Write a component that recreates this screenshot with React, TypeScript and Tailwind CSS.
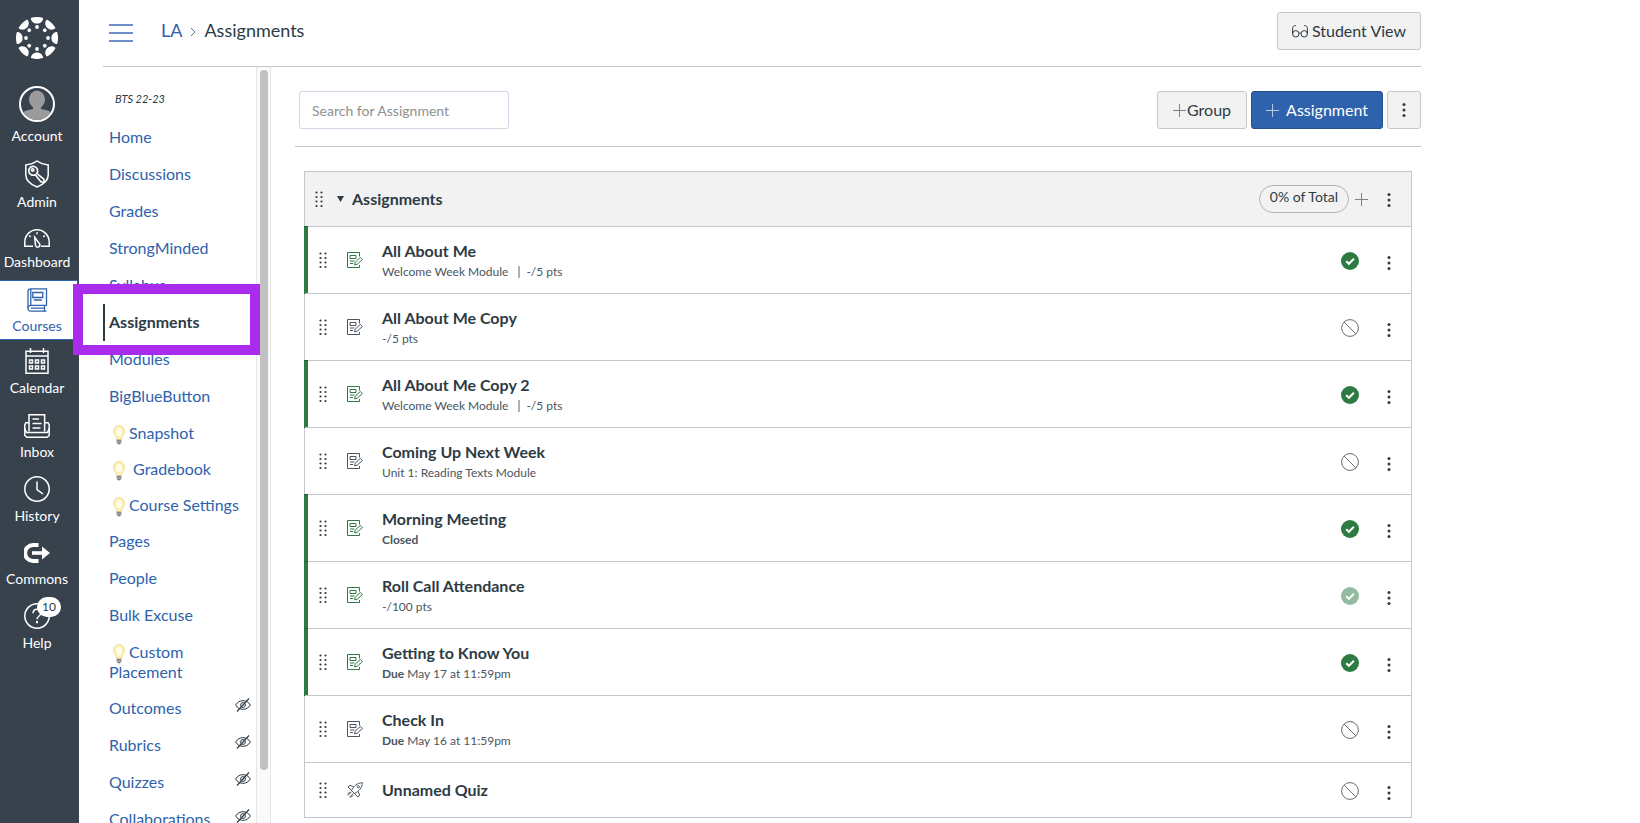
import type { ReactNode } from 'react';
import clsx from 'clsx';

type Status = 'published' | 'locked' | 'unpublished';

interface GlobalLink {
  label: string;
  icon: ReactNode;
  spacing: string;
  active?: boolean;
  badge?: number;
}

interface CourseLink {
  label: string;
  tool?: boolean;
  indent?: boolean;
  hidden?: boolean;
  active?: boolean;
}

interface Assignment {
  title: string;
  module?: string;
  points?: string;
  due?: string;
  closed?: boolean;
  quiz?: boolean;
  status: Status;
}

const LOGO_ANGLES = [0, 45, 90, 135, 180, 225, 270, 315];

function CanvasLogo() {
  return (
    <svg viewBox="0 0 42 42" className="h-[42px] w-[42px]" fill="#fff" aria-hidden="true">
      {LOGO_ANGLES.map((a) => (
        <g key={a} transform={`rotate(${a} 21 21)`}>
          <path d="M14.9 .9A21 21 0 0 1 27.1 .9C27.1 4.300 24.400 6.600 21 6.600S14.900 4.300 14.900 .9Z" />
          <circle cx="21" cy="10" r="1.900" />
        </g>
      ))}
    </svg>
  );
}

function AccountIcon() {
  return (
    <span className="block h-9 w-9 overflow-hidden rounded-full border-2 border-white bg-[#37424d]">
      <svg viewBox="0 0 32 32" className="h-8 w-8" fill="#9b9b9b" aria-hidden="true">
        <ellipse cx="16" cy="11.500" rx="8" ry="9" />
        <path d="M12 17h8v4c5 .8 9 2 11 4.500V32H1v-6.500C3 23 7 21.800 12 21Z" />
      </svg>
    </span>
  );
}

function AdminIcon() {
  return (
    <svg viewBox="0 0 26 28" className="h-7 w-[26px]" fill="none" stroke="currentColor" strokeWidth="1.500" aria-hidden="true">
      <path d="M13 1C10 3.200 6 4.600 1.800 4.900V15c0 5.500 5 9.500 11.200 12 6.200-2.500 11.200-6.500 11.200-12V4.900C20 4.600 16 3.200 13 1Z" />
      <path d="M12.700 13.100l6.400 5.200.2 2.500-2.700.1-5.300-6.600a4 4 0 1 1 1.400-1.200Z" transform="translate(-1.200 -1) scale(1.100)" />
      <circle cx="8.700" cy="10" r="1.200" />
    </svg>
  );
}

function DashboardIcon() {
  return (
    <svg viewBox="0 0 26 19" className="h-[19px] w-[26px]" fill="none" stroke="currentColor" strokeWidth="1.500" aria-hidden="true">
      <path d="M9 17.300H.8V13a12.200 12.200 0 0 1 24.400 0v4.300h-8.200" />
      <path d="M10.700 8.300l4.700 6.300a2.200 2.200 0 1 1-3.900 1.800Z" />
      <path d="M13 3.200v2M5.200 6.600l1.500 1.300M20.800 6.600l-1.500 1.300" />
    </svg>
  );
}

function CoursesIcon() {
  return (
    <svg viewBox="0 0 21 24" className="h-6 w-[21px]" fill="none" stroke="currentColor" strokeWidth="1.300" aria-hidden="true">
      <path d="M19.500 17.300V.8H3.500A2.500 2.500 0 0 0 1 3.300v17a2.600 2.600 0 0 0 2.600 2.900h15.900" />
      <path d="M19.800 17.300H3.600C2 17.300 1 18.500 1 20M17.500 17.300v6M4 20.200h13.500M3.800 1v16M5.800 4.500h10v5h-10ZM6.800 12h8" />
    </svg>
  );
}

function CalendarIcon() {
  return (
    <svg viewBox="0 0 24 26" className="h-[26px] w-6" fill="none" stroke="currentColor" strokeWidth="1.500" aria-hidden="true">
      <path d="M1 3.300h22v21.900H1ZM1 8h22M5.500 0v5M18.500 0v5" />
      <path d="M4.500 12h3v3h-3ZM10.500 12h3v3h-3ZM16.500 12h3v3h-3ZM4.500 18h3v3h-3ZM10.500 18h3v3h-3ZM16.500 18h3v3h-3Z" />
    </svg>
  );
}

function InboxIcon() {
  return (
    <svg viewBox="0 0 26 24" className="h-6 w-[26px]" fill="none" stroke="currentColor" strokeWidth="1.500" aria-hidden="true">
      <path d="M5 17.500V.8h15.600v16.700M5 8.800H1.800L.8 11v10.500L2.800 23.200h20.400l2-1.700V11l-1-2.200h-3.600" />
      <path d="M.8 14.500l1.700 4h21l1.700-4M8.500 5h6.500M8.500 9.500h9M8.500 14h8" />
    </svg>
  );
}

function HistoryIcon() {
  return (
    <svg viewBox="0 0 26 26" className="h-[26px] w-[26px]" fill="none" stroke="currentColor" strokeWidth="1.500" aria-hidden="true">
      <circle cx="13" cy="13" r="12.200" />
      <path d="M13 5.500V13.500l6 4.500" />
    </svg>
  );
}

function CommonsIcon() {
  return (
    <svg viewBox="0 0 26 20" className="mb-0.5 h-5 w-[26px]" fill="none" stroke="currentColor" aria-hidden="true">
      <path d="M14.500 2.100H9a7.900 7.900 0 0 0 0 15.800h5.500" strokeWidth="4" />
      <path d="M8 10h12" strokeWidth="3.600" />
      <path d="M18 3.500L26 10l-8 6.500Z" fill="currentColor" stroke="none" />
    </svg>
  );
}

function HelpIcon() {
  return (
    <svg viewBox="0 0 26 26" className="h-[26px] w-[26px]" fill="none" stroke="currentColor" strokeWidth="1.500" aria-hidden="true">
      <circle cx="13" cy="13" r="12.200" />
      <path d="M9 10.200c0-2.400 1.600-3.900 4-3.900s4 1.500 4 3.600c0 3-4 3.200-4 6.400" />
      <path d="M13 18v2.200" strokeWidth="2" />
    </svg>
  );
}

function BulbIcon() {
  return (
    <svg viewBox="0 0 12 20" className="-my-1 mr-1 ml-1 inline-block h-5 w-3 align-middle" aria-hidden="true">
      <path d="M6 .5a5.500 5.500 0 0 0-5.500 5.800C.5 9.500 3.500 11 3.600 14.500h4.800C8.500 11 11.500 9.500 11.500 6.300A5.500 5.500 0 0 0 6 .5Z" fill="#fdf0b4" stroke="#f0d88c" strokeWidth=".8" />
      <ellipse cx="6" cy="7" rx="2.800" ry="4" fill="#fffdf0" />
      <path d="M3.600 14.500h4.800v3L7 19.600H5l-1.400-2Z" fill="#a9a9a9" />
      <path d="M3.600 16h4.800M4.500 18.500h3" stroke="#666" strokeWidth=".7" />
    </svg>
  );
}

function HiddenIcon() {
  return (
    <svg viewBox="0 0 16 14" className="h-3.5 w-4 shrink-0 text-[#2d3b45]" fill="none" stroke="currentColor" role="img" aria-label="Disabled">
      <path d="M.6 7C2.500 4 5 2.700 8 2.700S13.500 4 15.400 7C13.500 10 11 11.300 8 11.300S2.500 10 .6 7Z" />
      <circle cx="8" cy="7" r="2.400" />
      <path d="M14 .5L2 13.500" strokeWidth="1.200" />
    </svg>
  );
}

function GlassesIcon() {
  return (
    <svg viewBox="0 0 16 13" className="h-[13px] w-4" fill="none" stroke="currentColor" aria-hidden="true">
      <circle cx="3.800" cy="8.800" r="3.200" />
      <circle cx="12.200" cy="8.800" r="3.200" />
      <path d="M.6 9V3.500C.6 1.700 1.600.6 3.800.6M15.400 9V3.500c0-1.800-1-2.900-3.200-2.900M7 8.500c.6-.6 1.400-.6 2 0" />
    </svg>
  );
}

function PlusIcon() {
  return (
    <svg viewBox="0 0 13 13" className="h-[13px] w-[13px]" stroke="currentColor" aria-hidden="true">
      <path d="M6.500 0v13M0 6.500h13" />
    </svg>
  );
}

function KebabIcon() {
  return (
    <svg viewBox="0 0 4 16" className="h-4 w-1" fill="currentColor" aria-hidden="true">
      <circle cx="2" cy="2.400" r="1.500" />
      <circle cx="2" cy="8" r="1.500" />
      <circle cx="2" cy="13.600" r="1.500" />
    </svg>
  );
}

function DragHandle() {
  return (
    <svg viewBox="0 0 8 17" className="h-[17px] w-2 shrink-0" fill="#2d3b45" aria-hidden="true">
      {[1.5, 6, 10.500, 15].map((y) => (
        <g key={y}>
          <circle cx="1.500" cy={y} r="1.100" />
          <circle cx="6.500" cy={y} r="1.100" />
        </g>
      ))}
    </svg>
  );
}

function AssignmentIcon() {
  return (
    <svg viewBox="0 0 16 16" className="h-4 w-4" fill="none" stroke="currentColor" aria-hidden="true">
      <path d="M12.500 4.500V.5H.5v15h12v-2.500" />
      <path d="M3 3.500h6v3H3ZM3 9h4.500M3 11.500h3" />
      <path d="M7.500 12.800l.6-2.500 5.300-4.900 2 2.100-5.300 4.800Z" />
    </svg>
  );
}

function QuizIcon() {
  return (
    <svg viewBox="0 0 16 16" className="h-4 w-4" fill="none" stroke="currentColor" aria-hidden="true">
      <path d="M4.500 8.500C6.500 4.500 10 .8 15.300.7c0 5.300-3.800 8.800-7.800 10.800Z" />
      <path d="M6.800 4.900L3 3.200 1 5l3.600 3.500M11 9.200l1.600 3.800-1.800 2-3.300-3.500" />
      <circle cx="11.300" cy="4.700" r="1.100" />
      <path d="M4.800 9.500L.8 13.500M6.500 11.300l-4 4M3 9.800L.6 12M6 13.200L4 15.500" />
    </svg>
  );
}

function StatusIcon({ status }: { status: Status }) {
  if (status === 'unpublished') {
    return (
      <svg viewBox="0 0 18 18" className="h-[18px] w-[18px]" fill="none" stroke="#6b6b6b" role="img" aria-label="Unpublished">
        <circle cx="9" cy="9" r="8.400" />
        <path d="M3.200 3.200l11.600 11.600" />
      </svg>
    );
  }
  return (
    <svg
      viewBox="0 0 18 18"
      className={clsx('h-[18px] w-[18px]', status === 'locked' && 'opacity-50')}
      role="img"
      aria-label="Published"
    >
      <circle cx="9" cy="9" r="9" fill="#2d7b43" />
      <path d="M5.200 9.200l2.700 2.600 5-5" fill="none" stroke="#fff" strokeWidth="2" />
    </svg>
  );
}

const GLOBAL_LINKS: GlobalLink[] = [
  { label: 'Account', icon: <AccountIcon />, spacing: 'h-[68px]' },
  { label: 'Admin', icon: <AdminIcon />, spacing: 'mt-1.5 h-15' },
  { label: 'Dashboard', icon: <DashboardIcon />, spacing: 'h-15' },
  { label: 'Courses', icon: <CoursesIcon />, spacing: 'mt-[3px] h-15', active: true },
  { label: 'Calendar', icon: <CalendarIcon />, spacing: 'mt-[3px] h-15' },
  { label: 'Inbox', icon: <InboxIcon />, spacing: 'mt-1 h-15' },
  { label: 'History', icon: <HistoryIcon />, spacing: 'mt-1 h-15' },
  { label: 'Commons', icon: <CommonsIcon />, spacing: 'mt-[3px] h-15' },
  { label: 'Help', icon: <HelpIcon />, spacing: 'mt-1 h-15', badge: 10 },
];

const COURSE_LINKS: CourseLink[] = [
  { label: 'Home' },
  { label: 'Discussions' },
  { label: 'Grades' },
  { label: 'StrongMinded' },
  { label: 'Syllabus' },
  { label: 'Assignments', active: true },
  { label: 'Modules' },
  { label: 'BigBlueButton' },
  { label: 'Snapshot', tool: true },
  { label: 'Gradebook', tool: true, indent: true },
  { label: 'Course Settings', tool: true },
  { label: 'Pages' },
  { label: 'People' },
  { label: 'Bulk Excuse' },
  { label: 'Custom Placement', tool: true },
  { label: 'Outcomes', hidden: true },
  { label: 'Rubrics', hidden: true },
  { label: 'Quizzes', hidden: true },
  { label: 'Collaborations', hidden: true },
];

const ASSIGNMENTS: Assignment[] = [
  { title: 'All About Me', module: 'Welcome Week Module', points: '-/5 pts', status: 'published' },
  { title: 'All About Me Copy', points: '-/5 pts', status: 'unpublished' },
  { title: 'All About Me Copy 2', module: 'Welcome Week Module', points: '-/5 pts', status: 'published' },
  { title: 'Coming Up Next Week', module: 'Unit 1: Reading Texts Module', status: 'unpublished' },
  { title: 'Morning Meeting', closed: true, status: 'published' },
  { title: 'Roll Call Attendance', points: '-/100 pts', status: 'locked' },
  { title: 'Getting to Know You', due: 'May 17 at 11:59pm', status: 'published' },
  { title: 'Check In', due: 'May 16 at 11:59pm', status: 'unpublished' },
  { title: 'Unnamed Quiz', quiz: true, status: 'unpublished' },
];

function GlobalNav() {
  return (
    <nav className="w-[79px] shrink-0 bg-[#37424d] pt-[17px] text-white" aria-label="Global">
      <a href="#home" className="mb-6 flex w-[74px] justify-center" aria-label="Canvas">
        <CanvasLogo />
      </a>
      <ul>
        {GLOBAL_LINKS.map((link) => (
          <li key={link.label}>
            <a
              href={`#${link.label.toLowerCase()}`}
              className={clsx(
                'flex w-[78px] flex-col items-center justify-end gap-1 text-sm leading-5',
                link.spacing,
                link.active
                  ? 'border border-l-0 border-[#2f62ac] bg-white pr-[3px] pb-[3px] text-[#2f62ac]'
                  : 'pr-1 pb-[5px]',
              )}
            >
              <span className="relative">
                {link.icon}
                {link.badge && (
                  <span className="absolute -top-1.5 left-[13px] flex h-5 w-6 items-center justify-center rounded-full bg-white text-xs text-[#2d3b45]">
                    {link.badge}
                  </span>
                )}
              </span>
              {link.label}
            </a>
          </li>
        ))}
      </ul>
    </nav>
  );
}

function CourseNav() {
  return (
    <nav className="w-[153px] shrink-0 pt-[23px]" aria-label="Course">
      <p className="mb-[11px] pl-3 text-[11px] leading-[18px] italic">BTS 22-23</p>
      <ul className="text-base leading-5">
        {COURSE_LINKS.map((link) => (
          <li key={link.label} className="relative">
            <a
              href={`#${link.label.toLowerCase().replace(' ', '-')}`}
              className={clsx(
                'flex items-start justify-between pr-[5px]',
                link.tool ? 'py-2' : 'pt-2 pb-[9px]',
                link.active ? 'border-l-2 border-[#2d3b45] pl-1 font-bold text-[#2d3b45]' : 'pl-1.5 text-[#2f62ac]',
              )}
            >
              <span className={clsx(link.indent && 'whitespace-pre')}>
                {link.tool && <BulbIcon />}
                {link.indent && ' '}
                {link.label}
              </span>
              {link.hidden && <HiddenIcon />}
            </a>
            {/* highlight callout */}
            {link.active && (
              <div className="pointer-events-none absolute -top-5 -right-1 -bottom-3.5 -left-[30px] z-10 border-[10px] border-[#a92beb]" />
            )}
          </li>
        ))}
      </ul>
    </nav>
  );
}

function AssignmentRow({ item }: { item: Assignment }) {
  const published = item.status !== 'unpublished';
  return (
    <li className="relative flex items-center border-t border-[#c1c7cc] pr-[19px] pl-3.5">
      {published && (
        <span className="absolute -top-px -bottom-px -left-px w-1 border-y border-[#22592f] bg-[#2d7b43]" />
      )}
      <DragHandle />
      <span className={clsx('ml-5 shrink-0', published ? 'text-[#2d7b43]' : 'text-[#4a5560]')}>
        {item.quiz ? <QuizIcon /> : <AssignmentIcon />}
      </span>
      <div className={clsx('ml-[19px] flex-1', item.quiz ? 'py-[15px]' : 'py-3')}>
        <a href="#assignment" className="block text-base leading-6 font-bold text-[#2d3b45]">
          {item.title}
        </a>
        {!item.quiz && (
          <div className="flex items-center text-xs leading-[18px] text-[#4a5560]">
            {item.module && <span>{item.module}</span>}
            {item.module && item.points && <span className="mr-1.5 ml-2.5 h-3 w-0.5 bg-[#aab1b7]" />}
            {item.points && <span>{item.points}</span>}
            {item.closed && <strong>Closed</strong>}
            {item.due && (
              <span>
                <strong>Due</strong> {item.due}
              </span>
            )}
          </div>
        )}
      </div>
      <button type="button" className="mt-0.5" aria-label={`Publish ${item.title}`}>
        <StatusIcon status={item.status} />
      </button>
      <button type="button" className="mt-1.5 ml-[27px] px-px text-[#2d3b45]" aria-label={`Manage ${item.title}`}>
        <KebabIcon />
      </button>
    </li>
  );
}

export default function App() {
  return (
    <div className="flex h-screen overflow-hidden bg-white font-['Lato',sans-serif] text-[#2d3b45]">
      <GlobalNav />
      <div className="flex max-w-[1342px] min-w-0 flex-1 flex-col pl-6">
        <header className="flex h-[67px] shrink-0 items-start border-b border-[#c1c7cc] pt-3">
          <button type="button" className="mt-3 ml-1.5 flex w-6 flex-col gap-1.5" aria-label="Toggle course menu">
            <span className="h-0.5 w-full bg-[#6b8fc6]" />
            <span className="h-0.5 w-full bg-[#6b8fc6]" />
            <span className="h-0.5 w-full bg-[#6b8fc6]" />
          </button>
          <nav className="ml-7 flex h-9 items-center text-lg" aria-label="Breadcrumb">
            <a href="#la" className="text-[#2f62ac]">
              LA
            </a>
            <svg viewBox="0 0 6 10" className="mx-2 mt-1 h-2.5 w-1.5" fill="none" stroke="#5f6b75" aria-hidden="true">
              <path d="M.8 .8L5 5 .8 9.200" />
            </svg>
            <span>Assignments</span>
          </nav>
          <button
            type="button"
            className="ml-auto flex h-[38px] items-center gap-1 rounded-[3px] border border-[#c1c7cc] bg-[#f2f2f2] px-3.5 text-base"
          >
            <GlassesIcon />
            Student View
          </button>
        </header>

        <div className="flex min-h-0 flex-1">
          <CourseNav />
          <div className="w-[15px] shrink-0 border-x border-[#e6e6e6] bg-[#fafafa] px-[3px] pt-[3px]">
            <div className="h-[93%] w-2 rounded-full bg-[#c1c1c1]" />
          </div>

          <main className="min-w-0 flex-1 pl-6">
            <div className="flex items-center gap-1 border-b border-[#c1c7cc] pt-6 pb-[17px] pl-1">
              <input
                type="text"
                aria-label="Search for Assignment"
                placeholder="Search for Assignment"
                className="mr-auto h-[38px] w-[210px] rounded-[3px] border border-[#cdd6e2] px-3 text-sm placeholder:text-[#8f8f8f]"
              />
              <button
                type="button"
                className="flex h-[38px] items-center gap-px rounded-[3px] border border-[#c1c7cc] bg-[#f2f2f2] px-[15px] text-base"
              >
                <span className="text-[#7a828a]">
                  <PlusIcon />
                </span>
                Group
              </button>
              <button
                type="button"
                className="flex h-[38px] items-center gap-[7px] rounded-[3px] border border-[#254f8c] bg-[#2f62ac] px-3.5 text-base text-white"
              >
                <span className="text-[#b5c7e2]">
                  <PlusIcon />
                </span>
                Assignment
              </button>
              <button
                type="button"
                aria-label="Assignments settings"
                className="flex h-[38px] w-[34px] items-center justify-center rounded-[3px] border border-[#c1c7cc] bg-[#f2f2f2]"
              >
                <KebabIcon />
              </button>
            </div>

            <section className="mx-[9px] mt-6 border border-[#c1c7cc]">
              <div className="flex h-[54px] items-center bg-[#f2f2f2] pr-[19px] pl-2.5">
                <DragHandle />
                <button type="button" className="ml-3.5 flex items-center gap-2" aria-expanded="true">
                  <svg viewBox="0 0 7 6" className="h-1.5 w-[7px]" fill="#2d3b45" aria-hidden="true">
                    <path d="M0 0h7L3.500 6Z" />
                  </svg>
                  <h2 className="text-base font-bold">Assignments</h2>
                </button>
                <span className="ml-auto flex h-7 items-center rounded-full border border-[#b3b3b3] px-2.5 pb-1 text-sm">
                  0% of Total
                </span>
                <button type="button" className="ml-1.5 text-[#7a828a]" aria-label="Add assignment to group">
                  <PlusIcon />
                </button>
                <button type="button" className="mt-0.5 ml-[18px] px-px" aria-label="Manage group">
                  <KebabIcon />
                </button>
              </div>
              <ul>
                {ASSIGNMENTS.map((item) => (
                  <AssignmentRow key={item.title} item={item} />
                ))}
              </ul>
            </section>
          </main>
        </div>
      </div>
    </div>
  );
}
